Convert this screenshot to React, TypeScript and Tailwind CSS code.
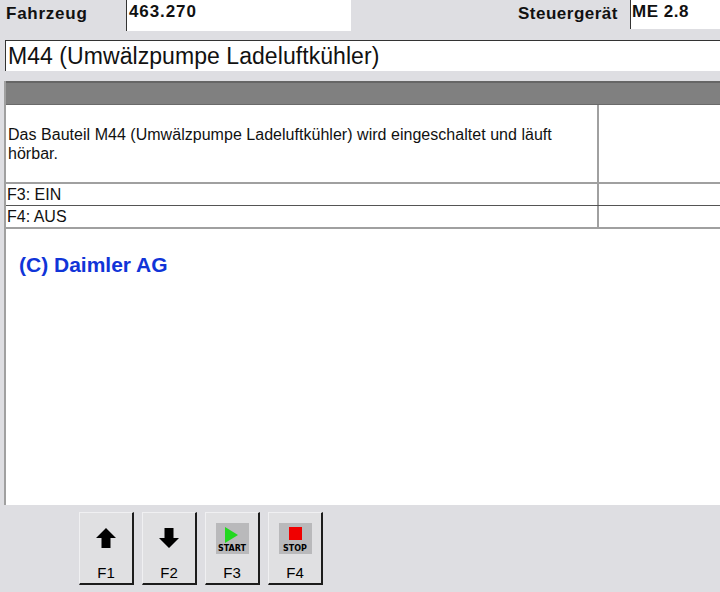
const font = "font-['Liberation_Sans',Arial,sans-serif]";

function FKey({ label, children }: { label: string; children: React.ReactNode }) {
  return (
    <div className="flex h-[73px] w-[55px] flex-col items-center border-t border-l border-t-[#f0f0f2] border-l-[#f0f0f2] border-r-2 border-b-2 border-r-[#1c1c1c] border-b-[#1c1c1c] bg-[#e0e0e2]">
      <div className="mt-[9px] flex h-[32px] items-center justify-center">{children}</div>
      <span className="mt-[11px] text-[15px] leading-[16px] text-black">{label}</span>
    </div>
  );
}

function ArrowIcon({ down = false }: { down?: boolean }) {
  return (
    <svg width="22" height="22" viewBox="0 0 22 22" className={down ? 'rotate-180' : ''}>
      <path d="M11 1 L21 11 L15.5 11 L15.5 21 L6.5 21 L6.5 11 L1 11 Z" fill="#000" />
    </svg>
  );
}

function MediaIcon({ label, children }: { label: string; children: React.ReactNode }) {
  return (
    <div className="flex h-[31px] w-[33px] flex-col items-center bg-[#b9b9bb]">
      <div className="flex h-[20px] items-end">{children}</div>
      <span className="mt-[1px] text-[8px] leading-[9px] font-bold text-black font-['DejaVu_Sans',sans-serif]">{label}</span>
    </div>
  );
}

export default function App() {
  return (
    <div className={`${font} flex h-[592px] w-[720px] flex-col overflow-hidden bg-[#dedee2]`}>
      {/* head row */}
      <div className="flex h-[31px]">
        <span className="ml-[6px] w-[120px] pt-[5px] text-[17px] leading-[18px] font-bold tracking-[0.75px] text-[#111]">Fahrzeug</span>
        <div className="h-[31px] w-[225px] border-l border-[#333] bg-white pl-[2px] text-[17px] leading-[24px] font-bold tracking-[0.9px] text-[#111]">463.270</div>
        <span className="ml-[167px] w-[112px] pt-[5px] text-[17px] leading-[18px] font-bold tracking-[0.5px] whitespace-nowrap text-[#111]">Steuergerät</span>
        <div className="h-[29px] flex-1 border-l border-[#333] bg-white pl-[1px] text-[17px] leading-[24px] font-bold tracking-[0.5px] text-[#111]">ME 2.8</div>
      </div>

      {/* title */}
      <div className="mt-[9px] ml-[5px] h-[31px] border-t border-l border-[#333] bg-white pl-[2px] text-[23px] leading-[30px] tracking-[0.06px] text-[#111]">
        M44 (Umwälzpumpe Ladeluftkühler)
      </div>

      {/* content */}
      <div className="mt-[10px] ml-[4px] flex h-[424px] flex-col border-l-2 border-[#a0a0a0] bg-white">
        <div className="h-[24px] border-t-2 border-b border-t-[#666] border-b-[#6a6a6a] bg-[#808080]" />
        <div className="flex h-[79px] border-b-2 border-[#a0a0a0]">
          <div className="w-[593px] border-r-2 border-[#a0a0a0] pt-[20px] pl-[2px] text-[16px] leading-[19px] tracking-[0.03px] text-[#111]">
            Das Bauteil M44 (Umwälzpumpe Ladeluftkühler) wird eingeschaltet und läuft<br />hörbar.
          </div>
        </div>
        <div className="flex h-[22px] border-b border-[#555]">
          <div className="w-[593px] border-r-2 border-[#a0a0a0] pl-[1px] text-[16px] leading-[21px] text-[#111]">F3: EIN</div>
        </div>
        <div className="flex h-[23px] border-b-2 border-[#a0a0a0]">
          <div className="w-[593px] border-r-2 border-[#a0a0a0] pl-[1px] text-[16px] leading-[21px] text-[#111]">F4: AUS</div>
        </div>
        <div className="mt-[25px] ml-[13px] text-[21px] leading-[22px] font-bold text-[#1034d8]">(C) Daimler AG</div>
      </div>

      {/* function keys */}
      <div className="mt-[7px] ml-[79px] flex gap-[8px]">
        <FKey label="F1"><ArrowIcon /></FKey>
        <FKey label="F2"><ArrowIcon down /></FKey>
        <FKey label="F3">
          <MediaIcon label="START">
            <svg width="15" height="16" viewBox="0 0 15 16" className="mr-[2px]"><path d="M1 0 L14 8 L1 16 Z" fill="#22d81f" /></svg>
          </MediaIcon>
        </FKey>
        <FKey label="F4">
          <MediaIcon label="STOP">
            <div className="mb-[3px] h-[13px] w-[13px] bg-[#f00000]" />
          </MediaIcon>
        </FKey>
      </div>
    </div>
  );
}
